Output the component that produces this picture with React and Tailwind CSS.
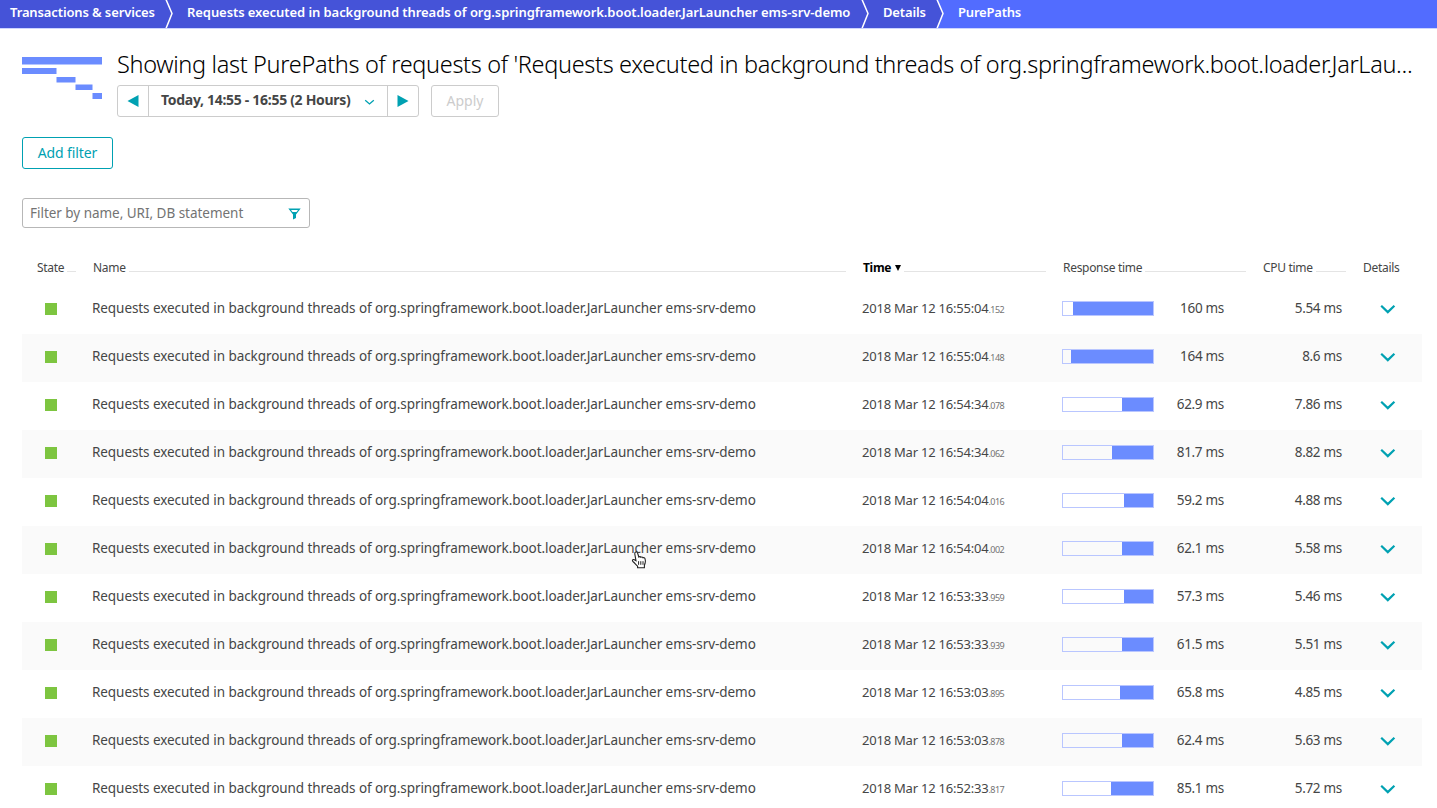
const NAME = "Requests executed in background threads of org.springframework.boot.loader.JarLauncher ems-srv-demo";

const ROWS = [
  ["16:55:04", ".152", 80, "160 ms", "5.54 ms"],
  ["16:55:04", ".148", 82, "164 ms", "8.6 ms"],
  ["16:54:34", ".078", 31, "62.9 ms", "7.86 ms"],
  ["16:54:34", ".062", 41, "81.7 ms", "8.82 ms"],
  ["16:54:04", ".016", 29, "59.2 ms", "4.88 ms"],
  ["16:54:04", ".002", 31, "62.1 ms", "5.58 ms"],
  ["16:53:33", ".959", 29, "57.3 ms", "5.46 ms"],
  ["16:53:33", ".939", 31, "61.5 ms", "5.51 ms"],
  ["16:53:03", ".895", 33, "65.8 ms", "4.85 ms"],
  ["16:53:03", ".878", 31, "62.4 ms", "5.63 ms"],
  ["16:52:33", ".817", 42, "85.1 ms", "5.72 ms"],
];

const GRID = "grid grid-cols-[56px_770px_200px_200px_100px_74px]";

function Crumb({ className, last, children }) {
  return (
    <div className={`relative flex h-7 shrink-0 items-center whitespace-nowrap pb-[3px] text-[13px] font-semibold text-white ${last ? "bg-[#526cff]" : "bg-[#4553d8]"} ${className}`}>
      {children}
      {!last && (
        <svg className="absolute -right-2 top-0 z-10" width="9" height="28" viewBox="0 0 9 28">
          <path d="M0 0H1.5L7 13.5L1.5 28H0Z" fill="#4553d8" />
          <path d="M1 -0.5L7 13.5L1 28.5" fill="none" stroke="#fff" strokeWidth="1.5" />
        </svg>
      )}
    </div>
  );
}

function HeaderCell({ children, line = true, className = "" }) {
  return (
    <div className={`flex items-baseline pl-[15px] pr-[2px] text-[12px] tracking-[-0.3px] ${className}`}>
      <span className="whitespace-nowrap">{children}</span>
      {line && <span className="ml-[3px] h-px flex-1 bg-[#e4e4e4]" />}
    </div>
  );
}

function Row({ row, striped }) {
  const [time, millis, fill, response, cpu] = row;
  return (
    <div className={`${GRID} h-12 items-center text-[13.5px] leading-5 ${striped ? "bg-[#fafafa]" : "bg-white"}`}>
      <div className="pl-[23px]">
        <div className="h-3 w-3 -translate-y-px bg-[#7dc540]" />
      </div>
      <div className="whitespace-nowrap pb-1 pl-[14px] tracking-[-0.07px]">{NAME}</div>
      <div className="whitespace-nowrap pb-[3px] pl-[14px] text-[13px]">
        <span className="tracking-[-0.22px]">2018 Mar 12 {time}</span>
        <span className="text-[9px] tracking-[-0.5px] text-[#737373]">{millis}</span>
      </div>
      <div className="flex items-center justify-between pb-[3px] pl-[14px] pr-6">
        <div className="flex h-[15px] w-[92px] justify-end border border-[#b9c6ff]">
          <div className="bg-[#6b8cff]" style={{ width: fill }} />
        </div>
        <span className="-translate-y-px tracking-[-0.3px]">{response}</span>
      </div>
      <div className="pb-1 pr-[6px] text-right tracking-[-0.3px]">{cpu}</div>
      <div className="pl-8">
        <svg className="-translate-y-px" width="16" height="10" viewBox="0 0 16 10">
          <path d="M1.2 1.7L7.8 8.1L14.4 1.7" fill="none" stroke="#00a1b2" strokeWidth="2.2" />
        </svg>
      </div>
    </div>
  );
}

export default function App() {
  return (
    <div className="relative h-[808px] w-[1437px] overflow-hidden bg-white font-['Noto_Sans',sans-serif] text-[#454646]">
      <nav className="flex h-[29px] border-b border-[#ccd4ff]">
        <Crumb className="w-[166px] pl-[10px]">
          <span className="tracking-[-0.12px]">Transactions &amp; services</span>
        </Crumb>
        <Crumb className="w-[696px] pl-[21px]">
          <span className="tracking-[-0.07px]">{NAME}</span>
        </Crumb>
        <Crumb className="w-[75px] pl-[21px]">
          <span className="tracking-[-0.15px]">Details</span>
        </Crumb>
        <Crumb last className="flex-1 pl-[21px]">
          <span className="tracking-[-0.2px]">PurePaths</span>
        </Crumb>
      </nav>

      <header className="flex h-[108px] pl-[22px] pt-[21px]">
        <svg className="mt-[7px] shrink-0" width="81" height="43" viewBox="0 0 81 43" fill="#6b8cff">
          <rect x="0" y="0" width="80" height="7.5" />
          <rect x="0" y="11" width="34.5" height="6" />
          <rect x="34.5" y="20" width="19" height="5.5" />
          <rect x="53.5" y="27.5" width="17" height="5.5" />
          <rect x="70.5" y="36" width="9.5" height="6" />
        </svg>
        <div className="ml-[14px]">
          <h1 className="h-[35px] whitespace-nowrap text-[23.5px] font-light leading-[29px] tracking-[-0.33px] text-black">
            Showing last PurePaths of requests of &apos;Requests executed in background threads of org.springframework.boot.loader.JarLau...
          </h1>
          <div className="flex h-8 gap-3">
            <div className="flex w-[302px] rounded-[3px] border border-[#ccc]">
              <div className="flex w-[31px] items-center justify-center border-r border-[#ccc] pb-px">
                <svg width="12" height="12" viewBox="0 0 12 12"><path d="M11.5 0V12L0.5 6Z" fill="#00a1b2" /></svg>
              </div>
              <div className="flex w-[239px] items-center border-r border-[#ccc] pl-3 text-[14px] font-bold">
                <span className="whitespace-nowrap pb-1 tracking-[-0.3px]">Today, 14:55 - 16:55 (2 Hours)</span>
                <svg className="ml-auto mr-3 mt-[2px]" width="11" height="7" viewBox="0 0 11 7"><path d="M1.2 1.2L5.5 5L9.8 1.2" fill="none" stroke="#00a1b2" strokeWidth="1.3" /></svg>
              </div>
              <div className="flex flex-1 items-center justify-center pb-px">
                <svg width="12" height="12" viewBox="0 0 12 12"><path d="M0.5 0V12L11.5 6Z" fill="#00a1b2" /></svg>
              </div>
            </div>
            <button className="w-[68px] rounded-[3px] border border-[#ccc] pb-[2px] text-[14px] text-[#ccc]">Apply</button>
          </div>
        </div>
      </header>

      <main className="pl-[22px]">
        <button className="block h-8 w-[91px] rounded-[3px] border border-[#00a1b2] pb-[2px] text-[14px] tracking-[-0.1px] text-[#00a1b2]">Add filter</button>

        <div className="mt-[29px] flex h-[30px] w-[288px] items-center justify-between rounded-[3px] border border-[#b7b7b7] pl-[7px] pr-2 text-[13.5px] text-[#737373]">
          <span className="whitespace-nowrap tracking-[-0.03px]">Filter by name, URI, DB statement</span>
          <svg className="mt-[2px]" width="13" height="12" viewBox="0 0 13 12">
            <path fillRule="evenodd" d="M0.3 0.5H12.7L8 6.6V10L5 11.5V6.6ZM3 2L4.5 4H8.5L10 2Z" fill="#00a1b2" />
          </svg>
        </div>

        <section className="mt-[30px] w-[1400px]">
          <div className={`${GRID} h-7 leading-5`}>
            <HeaderCell>State</HeaderCell>
            <HeaderCell>Name</HeaderCell>
            <HeaderCell className="font-bold text-black">
              Time <svg className="ml-px inline-block align-[1px]" width="6" height="6" viewBox="0 0 6 6"><path d="M0 0H6L3 6Z" fill="#000" /></svg>
            </HeaderCell>
            <HeaderCell>Response time</HeaderCell>
            <HeaderCell>CPU time</HeaderCell>
            <HeaderCell line={false}>Details</HeaderCell>
          </div>
          {ROWS.map((row, i) => <Row key={row[0] + row[1]} row={row} striped={i % 2 === 1} />)}
        </section>
      </main>

      <svg className="absolute left-[631px] top-[551px]" width="16" height="18" viewBox="0 0 16 18">
        <path d="M4.7 1C5.6 0.7 6.3 1.3 6.6 2.2L7.8 6C8.5 5.4 9.4 5.6 9.8 6.3C10.6 5.7 11.6 5.9 12 6.8C12.8 6.4 13.7 6.8 14 7.7C14.5 9.2 14.7 10.4 14.1 12.3L13.4 14.2V16.7H6.6V15.2C5 13.8 3.7 12 1.9 10.5C0.9 9.6 1.6 8.2 2.9 8.6L5 9.8L3.8 3C3.6 2.1 3.9 1.3 4.7 1Z" fill="#fff" stroke="#222" strokeWidth="1.1" />
        <path d="M7.6 10.2V13.8M9.8 10.2V13.8M12 10.2V13.8" stroke="#222" strokeWidth="1" />
      </svg>
    </div>
  );
}
